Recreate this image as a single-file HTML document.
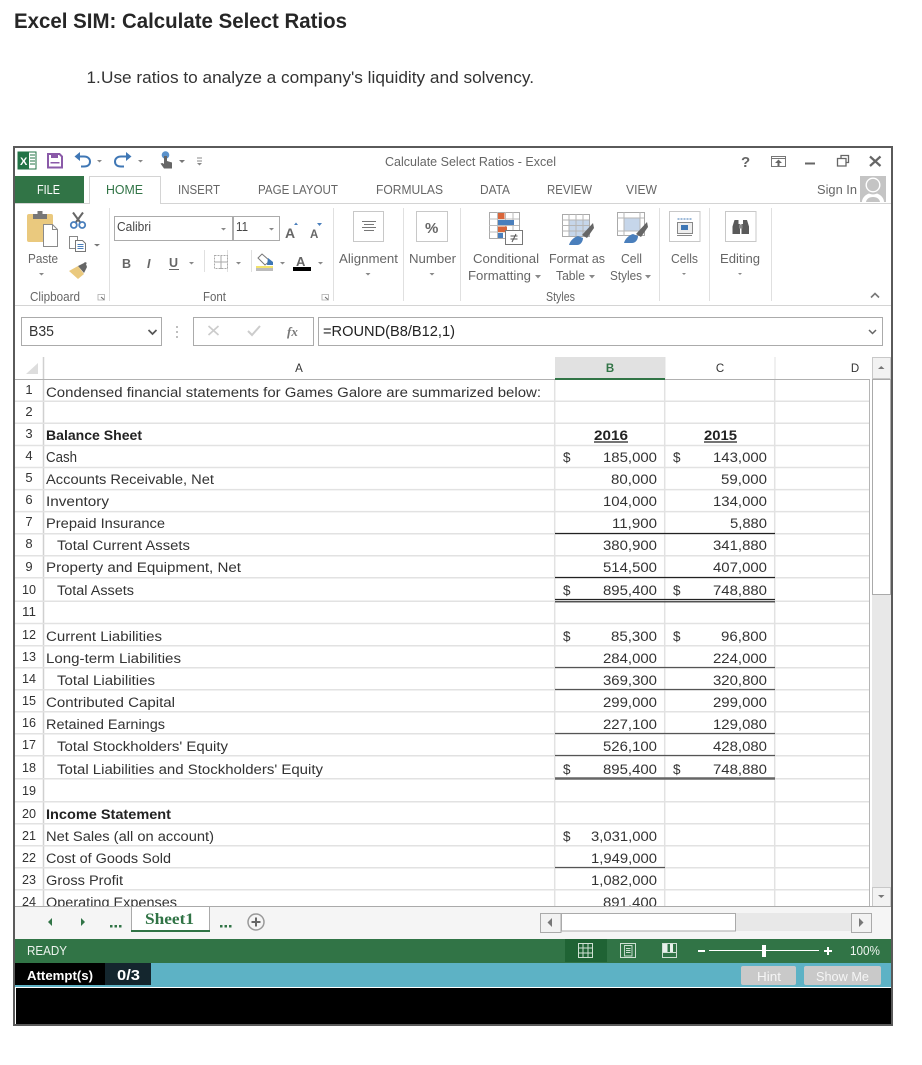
<!DOCTYPE html>
<html lang="en"><head><meta charset="utf-8"><title>Excel SIM: Calculate Select Ratios</title>
<style>
html,body{margin:0;padding:0;background:#fff;width:922px;height:1065px;overflow:hidden}
svg{display:block;font-family:"Liberation Sans",sans-serif}
.r text{font-size:13px;fill:#555}
.t text{font-size:12.5px;fill:#666}
.s text{font-size:13.5px;fill:#333}
.s .b{font-weight:bold;fill:#222}
.n text{font-size:13px;fill:#333;text-anchor:middle}
</style></head><body>
<svg width="922" height="1065" viewBox="0 0 922 1065" xmlns="http://www.w3.org/2000/svg">
<rect width="922" height="1065" fill="#fff"/>
<text x="14" y="28" font-size="21" font-weight="bold" fill="#262626" textLength="333" lengthAdjust="spacingAndGlyphs">Excel SIM: Calculate Select Ratios</text>
<text x="86.500" y="83" font-size="17" fill="#333">1.</text>
<text x="101" y="83" font-size="17" fill="#333" textLength="433" lengthAdjust="spacingAndGlyphs">Use ratios to analyze a company's liquidity and solvency.</text>

<!-- frame -->
<rect x="14" y="147" width="878" height="878" fill="#fff" stroke="#5a5a5a" stroke-width="2"/>

<!-- quick access -->
<g>
<rect x="18" y="152" width="18" height="17" fill="#fff" stroke="#217346" stroke-width="1"/>
<rect x="18" y="152" width="11" height="17" fill="#217346"/>
<text x="20" y="165" font-size="11" font-weight="bold" fill="#fff">X</text>
<path d="M30 155h5M30 158h5M30 161h5M30 164h5" stroke="#217346" stroke-width="1"/>
<path d="M48 154h11.500l2.500 2.500v11h-14z" fill="none" stroke="#8a5aa8" stroke-width="2"/>
<rect x="51" y="154" width="7" height="4" fill="#8a5aa8"/><rect x="50.500" y="162" width="9" height="1.500" fill="#8a5aa8"/>
<path d="M81 166.500h3c4 0 6-2 6-5s-2.500-5-6-5h-7" fill="none" stroke="#3f77b5" stroke-width="2"/>
<path d="M80 152l-5.500 4.500 5.500 4.500z" fill="#3f77b5"/>
<path d="M97 160l5 0-2.500 2.500z" fill="#888"/>
<path d="M124 166.500h-3c-4 0-6-2-6-5s2.500-5 6-5h7" fill="none" stroke="#3f77b5" stroke-width="2"/>
<path d="M126 152l5.500 4.500-5.500 4.500z" fill="#3f77b5"/>
<path d="M138 160l5 0-2.500 2.500z" fill="#888"/>
<circle cx="165.500" cy="155" r="3.800" fill="#5b92cb"/>
<path d="M164 156h3v5l5 1.500v6h-8l-3.500-5 2 -.5 1.500 1z" fill="#666"/>
<path d="M179 160l6 0-3 3z" fill="#777"/>
<path d="M197 158h5M197 161h5" stroke="#888" stroke-width="1"/><path d="M197 163l5 0-2.500 2.500z" fill="#888"/>
</g>
<text x="385" y="166" font-size="12.500" fill="#666" textLength="171" lengthAdjust="spacingAndGlyphs">Calculate Select Ratios - Excel</text>
<!-- window controls -->
<text x="741" y="167" font-size="15" font-weight="bold" fill="#666">?</text>
<rect x="771.500" y="156.500" width="14" height="10" fill="none" stroke="#777"/><path d="M771 158.500h15" stroke="#777"/><path d="M778.500 159.500l-3.500 3.500h2.500v3h2v-3h2.500z" fill="#666"/>
<rect x="805" y="162.500" width="10" height="2" fill="#666"/>
<path d="M841 158v-2.500h7.500v7H846M837.500 158.500h8.500v7.500h-8.500z" fill="none" stroke="#666" stroke-width="1.300"/>
<path d="M870 156.500l10.500 9.500M880.500 156.500l-10.500 9.500" stroke="#666" stroke-width="2.200"/>

<!-- tabs -->
<rect x="15" y="176" width="69" height="27" fill="#317446"/>
<path d="M15 203.500h74.500v-27h71v27H891" fill="#fff" stroke="#d4d4d4"/>
<g class="t">
<text x="37" y="194" style="fill:#fff" textLength="23" lengthAdjust="spacingAndGlyphs">FILE</text>
<text x="106" y="194" style="fill:#317446" textLength="37" lengthAdjust="spacingAndGlyphs">HOME</text>
<text x="178" y="194" textLength="42" lengthAdjust="spacingAndGlyphs">INSERT</text>
<text x="258" y="194" textLength="80" lengthAdjust="spacingAndGlyphs">PAGE LAYOUT</text>
<text x="376" y="194" textLength="67" lengthAdjust="spacingAndGlyphs">FORMULAS</text>
<text x="480" y="194" textLength="30" lengthAdjust="spacingAndGlyphs">DATA</text>
<text x="547" y="194" textLength="45" lengthAdjust="spacingAndGlyphs">REVIEW</text>
<text x="626" y="194" textLength="31" lengthAdjust="spacingAndGlyphs">VIEW</text>
<text x="817" y="194" textLength="40" lengthAdjust="spacingAndGlyphs">Sign In</text>
</g>
<rect x="860" y="176" width="26" height="26" fill="#c4c4c4"/>
<circle cx="873" cy="185" r="6.800" fill="#c4c4c4" stroke="#fff" stroke-width="1.400"/>
<path d="M862 202c0-4 3-7 7-8.500 2.500 1.200 5.500 1.200 8 0 4 1.500 7 4.500 7 8.500z" fill="#fff"/><path d="M866 202c.5-3 3-5 7-5s6.500 2 7 5z" fill="#c4c4c4"/>

<!-- ribbon separators -->
<path d="M109.500 208v93M333.500 208v93M403.500 208v93M460.500 208v93M659.500 208v93M709.500 208v93M771.500 208v93" stroke="#e0e0e0"/>
<path d="M15 305.500h876" stroke="#d4d4d4" stroke-width="1"/>

<!-- clipboard -->
<rect x="27" y="214" width="26" height="28" rx="2" fill="#eac97e"/>
<rect x="33" y="214" width="14" height="5" fill="#777"/><rect x="37.500" y="211" width="5" height="4" fill="#777"/>
<path d="M43.500 224.500h9l5 5v17h-14z" fill="#fff" stroke="#8a8a8a"/><path d="M52.500 224.500v5h5" fill="none" stroke="#8a8a8a"/>
<path d="M73 212.500l8 11M83 212.500l-8 11" stroke="#666" stroke-width="2"/>
<circle cx="73.800" cy="225" r="3" fill="#fff" stroke="#4a7fbc" stroke-width="1.800"/><circle cx="82.200" cy="225" r="3" fill="#fff" stroke="#4a7fbc" stroke-width="1.800"/>
<path d="M69.500 236.500h8v12h-8z" fill="#fff" stroke="#888"/><path d="M75.500 240.500h7l3 3v8h-10z" fill="#fff" stroke="#777"/>
<path d="M77.500 244.500h6M77.500 246.500h6M77.500 248.500h6" stroke="#4a7fbc"/>
<path d="M94 244l6 0-3 2.500z" fill="#777"/>
<path d="M69 271l9-5 6 8-6 5z" fill="#eac97e"/><path d="M78 266l6-3 1-1 2 1-1 1 1 3-3 6z" fill="#666"/>
<g class="t">
<text x="28" y="263" textLength="30" lengthAdjust="spacingAndGlyphs">Paste</text>
<text x="339" y="263" textLength="59" lengthAdjust="spacingAndGlyphs">Alignment</text>
<text x="409" y="263" textLength="47" lengthAdjust="spacingAndGlyphs">Number</text>
<text x="473" y="263" textLength="66" lengthAdjust="spacingAndGlyphs">Conditional</text>
<text x="549" y="263" textLength="56" lengthAdjust="spacingAndGlyphs">Format as</text>
<text x="621" y="263" textLength="21" lengthAdjust="spacingAndGlyphs">Cell</text>
<text x="468" y="280" textLength="63" lengthAdjust="spacingAndGlyphs">Formatting</text>
<text x="556" y="280" textLength="29" lengthAdjust="spacingAndGlyphs">Table</text>
<text x="610" y="280" textLength="32" lengthAdjust="spacingAndGlyphs">Styles</text>
<text x="671" y="263" textLength="27" lengthAdjust="spacingAndGlyphs">Cells</text>
<text x="720" y="263" textLength="40" lengthAdjust="spacingAndGlyphs">Editing</text>
<text x="30" y="301" textLength="50" lengthAdjust="spacingAndGlyphs">Clipboard</text>
<text x="203" y="301" textLength="23" lengthAdjust="spacingAndGlyphs">Font</text>
<text x="546" y="301" textLength="29" lengthAdjust="spacingAndGlyphs">Styles</text>
</g>
<!-- small arrows -->
<path d="M39 273l5 0-2.500 2.500zM365.500 273l5 0-2.500 2.500zM429.500 273l5 0-2.500 2.500zM682 273l4 0-2 2zM738 273l4 0-2 2zM535 275l6 0-3 3.500zM589 275l6 0-3 3.500zM645 275l6 0-3 3.500z" fill="#888"/>
<path d="M98 294.500h6.500v5.500h-6.500zM322 294.500h6.500v5.500h-6.500z" fill="#fff" stroke="#aaa" stroke-width=".8"/>
<path d="M101 297l3 2.500M325 297l3 2.500" stroke="#666"/>
<path d="M871 297.500l4-4 4 4" fill="none" stroke="#777" stroke-width="1.600"/>

<!-- font group -->
<rect x="114.500" y="216.500" width="118" height="24" fill="#fff" stroke="#ababab"/>
<rect x="233.500" y="216.500" width="46" height="24" fill="#fff" stroke="#ababab"/>
<text x="117" y="231" font-size="12.500" fill="#444" textLength="34" lengthAdjust="spacingAndGlyphs">Calibri</text>
<text x="236" y="231" font-size="12.500" fill="#444" textLength="12" lengthAdjust="spacingAndGlyphs">11</text>
<path d="M221 228l5 0-2.500 2.500zM269 228l5 0-2.500 2.500z" fill="#888"/>
<text x="285" y="238" font-size="14" font-weight="bold" fill="#666">A</text><path d="M294 225l4 0-2-2.500z" fill="#4a7fbc"/>
<text x="310" y="238" font-size="11.500" font-weight="bold" fill="#666">A</text><path d="M317 223l5 0-2.500 3z" fill="#4a7fbc"/>
<text x="122" y="268" font-size="12.500" font-weight="bold" fill="#666">B</text>
<text x="147" y="268" font-size="12.500" font-weight="bold" font-style="italic" fill="#666">I</text>
<text x="169" y="267" font-size="12.500" font-weight="bold" fill="#666">U</text><path d="M169 269.500h10" stroke="#666" stroke-width="1"/>
<path d="M189 262l5 0-2.500 2.500zM236 262l5 0-2.500 2.500zM280 262l5 0-2.500 2.500zM318 262l5 0-2.500 2.500z" fill="#888"/>
<path d="M204.500 250v22M227.500 250v22M251.500 250v22" stroke="#e0e0e0"/>
<rect x="214.500" y="255.500" width="13" height="13" fill="none" stroke="#aaa" stroke-dasharray="2 1"/><path d="M214 262h14M221 255v14" stroke="#aaa"/>
<path d="M262 254l8 7-5 4-7-7z" fill="#fff" stroke="#777"/><path d="M268 258l5 4v3h-6z" fill="#3f77b5"/>
<rect x="256" y="266" width="17" height="2" fill="#f3e36b"/><rect x="256" y="268" width="17" height="3" fill="#bbb"/>
<text x="296" y="266" font-size="13" font-weight="bold" fill="#666">A</text><rect x="293" y="267" width="18" height="4" fill="#000"/>

<!-- align / number -->
<rect x="353.500" y="211.500" width="30" height="30" fill="#fff" stroke="#c8c8c8"/>
<path d="M362 221.500h14M364 224.500h10M362 227.500h14M364 230.500h10" stroke="#777"/>
<rect x="416.500" y="211.500" width="31" height="30" fill="#fff" stroke="#c8c8c8"/>
<text x="425" y="233" font-size="15" font-weight="bold" fill="#666">%</text>

<!-- conditional formatting -->
<rect x="489.500" y="212.500" width="30" height="26" fill="#fff" stroke="#aaa"/>
<path d="M489 219h30M489 225.500h30M489 232h30M497.500 212v26M505.500 212v26M513 212v26" stroke="#bbb"/>
<rect x="498" y="213" width="6.500" height="6" fill="#d9663a"/><rect x="498" y="220" width="16" height="5" fill="#4a7fbc"/><rect x="498" y="226.500" width="9" height="5.500" fill="#d9663a"/><rect x="498" y="233" width="5" height="5" fill="#4a7fbc"/>
<rect x="505.500" y="230.500" width="17" height="14" fill="#fff" stroke="#777"/>
<path d="M510.500 236h7M510.500 239h7M512 242l4-8" stroke="#555"/>

<!-- format as table -->
<rect x="562.500" y="214.500" width="27" height="22" fill="#fff" stroke="#aaa"/>
<rect x="569" y="220" width="20" height="16" fill="#c6d6ea"/>
<path d="M562 220h27M562 225.500h27M562 231h27M569 214v22M576 214v22M583 214v22" stroke="#b5b5b5"/>
<path d="M582 235l11-12 1 5-7 10z" fill="#666"/>
<path d="M569 245c1-4 5-8 9-9l5 2c0 3-2 7-6 7z" fill="#4a7fbc"/>
<!-- cell styles -->
<rect x="617.500" y="212.500" width="27" height="23" fill="#fff" stroke="#aaa"/>
<rect x="624" y="218" width="16" height="13" fill="#c6d6ea"/>
<path d="M617 218h27M617 231h27M624 212v24M640 212v24" stroke="#b5b5b5"/>
<path d="M636 234l11-12 1 5-7 10z" fill="#666"/>
<path d="M624 243c1-4 5-8 9-9l5 2c0 3-2 7-6 7z" fill="#4a7fbc"/>
<!-- cells -->
<rect x="669.500" y="211.500" width="30.500" height="30" fill="#fff" stroke="#c8c8c8"/>
<path d="M677.500 219h15" stroke="#3f77b5" stroke-dasharray="2 1"/>
<rect x="677.500" y="222.500" width="15" height="11" fill="#eee" stroke="#888"/><rect x="681" y="225" width="7" height="5" fill="#3f77b5"/>
<path d="M677 235.500h15" stroke="#888"/>
<!-- editing -->
<rect x="725.500" y="211.500" width="30.500" height="30" fill="#fff" stroke="#c8c8c8"/>
<path d="M734.500 220h4v4h1.500v10h-7.500v-7.500z" fill="#5a5a5a"/>
<path d="M747 220h-4v4h-1.500v10h7.500v-7.500z" fill="#5a5a5a"/>
<rect x="739" y="224.500" width="3.500" height="4" fill="#8a8a8a"/>

<!-- formula bar -->
<rect x="21.500" y="317.500" width="140" height="28" fill="#fff" stroke="#ababab"/>
<text x="29" y="336" font-size="14.500" fill="#333" textLength="25" lengthAdjust="spacingAndGlyphs">B35</text>
<path d="M148.500 330l4 4 4-4" fill="none" stroke="#555" stroke-width="1.700"/>
<path d="M177 326v2M177 331v2M177 336v2" stroke="#aaa" stroke-width="1.500"/>
<rect x="193.500" y="317.500" width="120" height="28" fill="#fff" stroke="#ababab"/>
<path d="M208.500 326l10 9M218.500 326l-10 9" stroke="#ccc" stroke-width="1.700"/>
<path d="M248 331l4 4 8-9" fill="none" stroke="#ccc" stroke-width="2"/>
<text x="287" y="336" font-size="13" font-style="italic" font-weight="bold" font-family="Liberation Serif" fill="#777">fx</text>
<rect x="318.500" y="317.500" width="564" height="28" fill="#fff" stroke="#ababab"/>
<text x="323" y="336" font-size="14.500" fill="#222" textLength="132" lengthAdjust="spacingAndGlyphs">=ROUND(B8/B12,1)</text>
<path d="M869 330l3.500 3.500 3.500-3.500" fill="none" stroke="#666" stroke-width="1.500"/>

<!-- sheet headers -->
<path d="M26 374l12-11v11z" fill="#ddd"/>
<rect x="555" y="357" width="110" height="21" fill="#e1e1e1"/>
<path d="M43.500 357v549" stroke="#d0d0d0" stroke-width="1.500"/>
<path d="M665 357v22M775 357v22" stroke="#e0e0e0"/>
<g font-size="11.500" text-anchor="middle">
<text x="299" y="372" fill="#333">A</text>
<text x="610" y="372" fill="#317446" font-weight="bold">B</text>
<text x="720" y="372" fill="#333">C</text>
<text x="855" y="372" fill="#333">D</text>
</g>
<!-- grid -->
<g stroke="#e2e2e2" stroke-width="1.500" fill="none">
<path d="M15 401.200H869M15 423.300H869M15 445.500H869M15 467.500H869M15 489.600H869M15 511.600H869M15 533.700H869M15 555.700H869M15 577.700H869M15 601.200H869M15 623.500H869M15 645.700H869M15 667.700H869M15 689.700H869M15 711.700H869M15 733.700H869M15 755.700H869M15 778.700H869M15 801.700H869M15 823.700H869M15 845.700H869M15 867.700H869M15 889.700H869"/>
<path d="M554.700 379V906M664.700 379V906M774.700 379V906"/>
</g>
<path d="M15 379.500H869" stroke="#b0b0b0" stroke-width="1"/>
<rect x="555" y="378" width="110" height="2" fill="#317446"/>
<path d="M869.500 379V906" stroke="#b5b5b5"/>
<!-- borders -->
<g stroke="#222" stroke-width="1.200" fill="none">
<path d="M555 533.500H775M555 577.500H775M555 599.500H775M555 601.800H775"/>
</g>
<g stroke="#555" stroke-width="1.200" fill="none">
<path d="M555 667.500H775M555 689.500H775M555 733.500H775M555 755.500H775M555 867.500H665"/>
<path d="M555 778.500H775" stroke-width="2.500" stroke="#666"/>
</g>
<!-- row numbers -->
<g class="n">
<text x="29" y="394">1</text><text x="29" y="416">2</text><text x="29" y="438">3</text><text x="29" y="460">4</text><text x="29" y="482">5</text><text x="29" y="504">6</text><text x="29" y="526">7</text><text x="29" y="548">8</text><text x="29" y="571">9</text>
<text x="29" y="594" textLength="14" lengthAdjust="spacingAndGlyphs">10</text><text x="29" y="616" textLength="14" lengthAdjust="spacingAndGlyphs">11</text><text x="29" y="639" textLength="14" lengthAdjust="spacingAndGlyphs">12</text><text x="29" y="661" textLength="14" lengthAdjust="spacingAndGlyphs">13</text><text x="29" y="683" textLength="14" lengthAdjust="spacingAndGlyphs">14</text><text x="29" y="705" textLength="14" lengthAdjust="spacingAndGlyphs">15</text><text x="29" y="727" textLength="14" lengthAdjust="spacingAndGlyphs">16</text><text x="29" y="749" textLength="14" lengthAdjust="spacingAndGlyphs">17</text><text x="29" y="772" textLength="14" lengthAdjust="spacingAndGlyphs">18</text><text x="29" y="795" textLength="14" lengthAdjust="spacingAndGlyphs">19</text><text x="29" y="818" textLength="14" lengthAdjust="spacingAndGlyphs">20</text><text x="29" y="840" textLength="14" lengthAdjust="spacingAndGlyphs">21</text><text x="29" y="862" textLength="14" lengthAdjust="spacingAndGlyphs">22</text><text x="29" y="884" textLength="14" lengthAdjust="spacingAndGlyphs">23</text><text x="29" y="906" textLength="14" lengthAdjust="spacingAndGlyphs">24</text>
</g>
<!-- labels -->
<g class="s">
<text x="46" y="397" textLength="495" lengthAdjust="spacingAndGlyphs">Condensed financial statements for Games Galore are summarized below:</text>
<text x="46" y="440" class="b" textLength="96" lengthAdjust="spacingAndGlyphs">Balance Sheet</text>
<text x="46" y="462" style="font-size:14.5px" textLength="31" lengthAdjust="spacingAndGlyphs">Cash</text>
<text x="46" y="484" textLength="168" lengthAdjust="spacingAndGlyphs">Accounts Receivable, Net</text>
<text x="46" y="506" textLength="63" lengthAdjust="spacingAndGlyphs">Inventory</text>
<text x="46" y="528" textLength="119" lengthAdjust="spacingAndGlyphs">Prepaid Insurance</text>
<text x="57" y="550" textLength="133" lengthAdjust="spacingAndGlyphs">Total Current Assets</text>
<text x="46" y="572" textLength="195" lengthAdjust="spacingAndGlyphs">Property and Equipment, Net</text>
<text x="57" y="595" textLength="77" lengthAdjust="spacingAndGlyphs">Total Assets</text>
<text x="46" y="641" textLength="116" lengthAdjust="spacingAndGlyphs">Current Liabilities</text>
<text x="46" y="663" textLength="135" lengthAdjust="spacingAndGlyphs">Long-term Liabilities</text>
<text x="57" y="685" textLength="98" lengthAdjust="spacingAndGlyphs">Total Liabilities</text>
<text x="46" y="707" textLength="129" lengthAdjust="spacingAndGlyphs">Contributed Capital</text>
<text x="46" y="729" textLength="119" lengthAdjust="spacingAndGlyphs">Retained Earnings</text>
<text x="57" y="751" textLength="171" lengthAdjust="spacingAndGlyphs">Total Stockholders' Equity</text>
<text x="57" y="774" textLength="266" lengthAdjust="spacingAndGlyphs">Total Liabilities and Stockholders' Equity</text>
<text x="46" y="819" class="b" textLength="125" lengthAdjust="spacingAndGlyphs">Income Statement</text>
<text x="46" y="841" textLength="168" lengthAdjust="spacingAndGlyphs">Net Sales (all on account)</text>
<text x="46" y="863" textLength="125" lengthAdjust="spacingAndGlyphs">Cost of Goods Sold</text>
<text x="46" y="885" textLength="77" lengthAdjust="spacingAndGlyphs">Gross Profit</text>
<text x="46" y="907" textLength="131" lengthAdjust="spacingAndGlyphs">Operating Expenses</text>
<!-- B/C values -->
<text x="594" y="440" class="b" textLength="34" lengthAdjust="spacingAndGlyphs">2016</text><text x="704" y="440" class="b" textLength="33" lengthAdjust="spacingAndGlyphs">2015</text>
<text x="563" y="462">$</text><text x="603" y="462" textLength="54" lengthAdjust="spacingAndGlyphs">185,000</text><text x="673" y="462">$</text><text x="713" y="462" textLength="54" lengthAdjust="spacingAndGlyphs">143,000</text>
<text x="611" y="484" textLength="46" lengthAdjust="spacingAndGlyphs">80,000</text><text x="721" y="484" textLength="46" lengthAdjust="spacingAndGlyphs">59,000</text>
<text x="603" y="506" textLength="54" lengthAdjust="spacingAndGlyphs">104,000</text><text x="713" y="506" textLength="54" lengthAdjust="spacingAndGlyphs">134,000</text>
<text x="612" y="528" textLength="45" lengthAdjust="spacingAndGlyphs">11,900</text><text x="730" y="528" textLength="37" lengthAdjust="spacingAndGlyphs">5,880</text>
<text x="603" y="550" textLength="54" lengthAdjust="spacingAndGlyphs">380,900</text><text x="713" y="550" textLength="54" lengthAdjust="spacingAndGlyphs">341,880</text>
<text x="603" y="572" textLength="54" lengthAdjust="spacingAndGlyphs">514,500</text><text x="713" y="572" textLength="54" lengthAdjust="spacingAndGlyphs">407,000</text>
<text x="563" y="595">$</text><text x="603" y="595" textLength="54" lengthAdjust="spacingAndGlyphs">895,400</text><text x="673" y="595">$</text><text x="713" y="595" textLength="54" lengthAdjust="spacingAndGlyphs">748,880</text>
<text x="563" y="641">$</text><text x="611" y="641" textLength="46" lengthAdjust="spacingAndGlyphs">85,300</text><text x="673" y="641">$</text><text x="721" y="641" textLength="46" lengthAdjust="spacingAndGlyphs">96,800</text>
<text x="603" y="663" textLength="54" lengthAdjust="spacingAndGlyphs">284,000</text><text x="713" y="663" textLength="54" lengthAdjust="spacingAndGlyphs">224,000</text>
<text x="603" y="685" textLength="54" lengthAdjust="spacingAndGlyphs">369,300</text><text x="713" y="685" textLength="54" lengthAdjust="spacingAndGlyphs">320,800</text>
<text x="603" y="707" textLength="54" lengthAdjust="spacingAndGlyphs">299,000</text><text x="713" y="707" textLength="54" lengthAdjust="spacingAndGlyphs">299,000</text>
<text x="603" y="729" textLength="54" lengthAdjust="spacingAndGlyphs">227,100</text><text x="713" y="729" textLength="54" lengthAdjust="spacingAndGlyphs">129,080</text>
<text x="603" y="751" textLength="54" lengthAdjust="spacingAndGlyphs">526,100</text><text x="713" y="751" textLength="54" lengthAdjust="spacingAndGlyphs">428,080</text>
<text x="563" y="774">$</text><text x="603" y="774" textLength="54" lengthAdjust="spacingAndGlyphs">895,400</text><text x="673" y="774">$</text><text x="713" y="774" textLength="54" lengthAdjust="spacingAndGlyphs">748,880</text>
<text x="563" y="841">$</text><text x="591" y="841" textLength="66" lengthAdjust="spacingAndGlyphs">3,031,000</text>
<text x="591" y="863" textLength="66" lengthAdjust="spacingAndGlyphs">1,949,000</text>
<text x="591" y="885" textLength="66" lengthAdjust="spacingAndGlyphs">1,082,000</text>
<text x="603" y="907" textLength="54" lengthAdjust="spacingAndGlyphs">891,400</text>
</g>
<path d="M594 442h34M704 442h33" stroke="#222" stroke-width="1.200"/>

<!-- v scrollbar -->
<rect x="870" y="357" width="21" height="549" fill="#fff"/>
<path d="M869.500 379V906" stroke="#b5b5b5"/>
<rect x="872" y="379" width="19" height="527" fill="#e8e8e8"/>
<rect x="872.500" y="357.500" width="18" height="21" fill="#f2f2f2" stroke="#c8c8c8"/>
<path d="M878 369l6.500 0-3.250-3z" fill="#777"/>
<rect x="872.500" y="379.500" width="18" height="215" fill="#fff" stroke="#aaa"/>
<rect x="872.500" y="887.500" width="18" height="19" fill="#f2f2f2" stroke="#c8c8c8"/>
<path d="M878 895l6.500 0-3.250 3z" fill="#777"/>

<!-- sheet tabs bar -->
<rect x="15" y="906" width="876" height="33" fill="#f5f5f5"/>
<path d="M15 906.500H891" stroke="#aaa"/>
<path d="M131.500 907v23.500h78V907" fill="#fff" stroke="#aaa"/>
<rect x="131" y="906" width="79" height="1" fill="#aaa"/><rect x="132" y="907" width="77" height="22" fill="#fff"/>
<rect x="131" y="930" width="79" height="2" fill="#317446"/>
<text x="145" y="924" font-family="Liberation Serif,serif" font-size="16" font-weight="bold" fill="#317446" textLength="49" lengthAdjust="spacingAndGlyphs">Sheet1</text>
<path d="M52 918l-4 4 4 4zM81 918l4 4-4 4z" fill="#317446"/>
<path d="M110 925h2.500v2.500H110zM114.500 925h2.500v2.500h-2.500zM119 925h2.500v2.500H119zM220 925h2.500v2.500H220zM224.500 925h2.500v2.500h-2.500zM229 925h2.500v2.500H229z" fill="#317446"/>
<circle cx="256" cy="922" r="8" fill="#f5f5f5" stroke="#999" stroke-width="1.500"/>
<path d="M256 917.500v9M251.500 922h9" stroke="#666" stroke-width="2"/>
<!-- h scrollbar -->
<rect x="561" y="913" width="290" height="18" fill="#e8e8e8"/>
<rect x="540.500" y="913.500" width="20.500" height="19" fill="#f2f2f2" stroke="#aaa"/>
<path d="M552 918l-4.500 4.500 4.500 4.500z" fill="#777"/>
<rect x="561.500" y="913.500" width="174" height="17.500" fill="#fff" stroke="#aaa"/>
<rect x="851.500" y="913.500" width="20" height="19" fill="#f2f2f2" stroke="#aaa"/>
<path d="M859 918l4.500 4.500-4.500 4.500z" fill="#777"/>

<!-- status bar -->
<rect x="15" y="939" width="876" height="24" fill="#317446"/>
<rect x="565" y="939" width="42" height="23" fill="#1f6334"/>
<text x="27" y="955" font-size="12.500" fill="#eef4ef" textLength="40" lengthAdjust="spacingAndGlyphs">READY</text>
<g fill="none" stroke="#cfe0d3">
<path d="M578.500 943.500h14v14h-14zM578.500 948h14M578.500 953h14M583 943.500v14M588 943.500v14"/>
<path d="M620.500 943.500h15v14h-15z"/><path d="M624.500 945.500h7.500v10.500h-7.500zM626 948.500h4.500M626 950.500h4.500M626 952.500h4.500" stroke-width=".9"/>
<path d="M662.500 943.500h14v14h-14z"/>
</g>
<path d="M663 944h4.500v8.500H663zM670 944h3v8.500h-3z" fill="#e8f0ea"/><path d="M663 952.500h13" stroke="#cfe0d3"/>
<rect x="698" y="950" width="7" height="2" fill="#fff"/>
<path d="M709 950.500h110" stroke="#fff"/>
<rect x="762" y="945" width="4" height="12" fill="#fff"/>
<path d="M824 951h8M828 947v8" stroke="#fff" stroke-width="2"/>
<text x="850" y="955" font-size="12.500" fill="#eef4ef" textLength="30" lengthAdjust="spacingAndGlyphs">100%</text>

<!-- attempts bar -->
<rect x="15" y="963" width="876" height="24" fill="#5db2c5"/>
<rect x="15" y="963" width="90" height="22" fill="#000"/>
<rect x="105" y="963" width="46" height="22" fill="#14262e"/>
<text x="27" y="980" font-size="13" font-weight="bold" fill="#fff" textLength="66" lengthAdjust="spacingAndGlyphs">Attempt(s)</text>
<text x="117" y="980" font-size="15" font-weight="bold" fill="#fff" textLength="23" lengthAdjust="spacingAndGlyphs">0/3</text>
<rect x="741" y="966" width="55" height="19" rx="2" fill="#c9c9c9"/>
<rect x="804" y="966" width="77" height="19" rx="2" fill="#c9c9c9"/>
<text x="757" y="981" font-size="13" fill="#f5f5f5" textLength="24" lengthAdjust="spacingAndGlyphs">Hint</text>
<text x="816" y="981" font-size="13" fill="#f5f5f5" textLength="53" lengthAdjust="spacingAndGlyphs">Show Me</text>
<rect x="15" y="987" width="876" height="1" fill="#fff"/>
<rect x="15" y="988" width="876" height="36" fill="#000"/>
<rect x="15" y="988" width="1" height="36" fill="#fff"/>
</svg>
</body></html>
